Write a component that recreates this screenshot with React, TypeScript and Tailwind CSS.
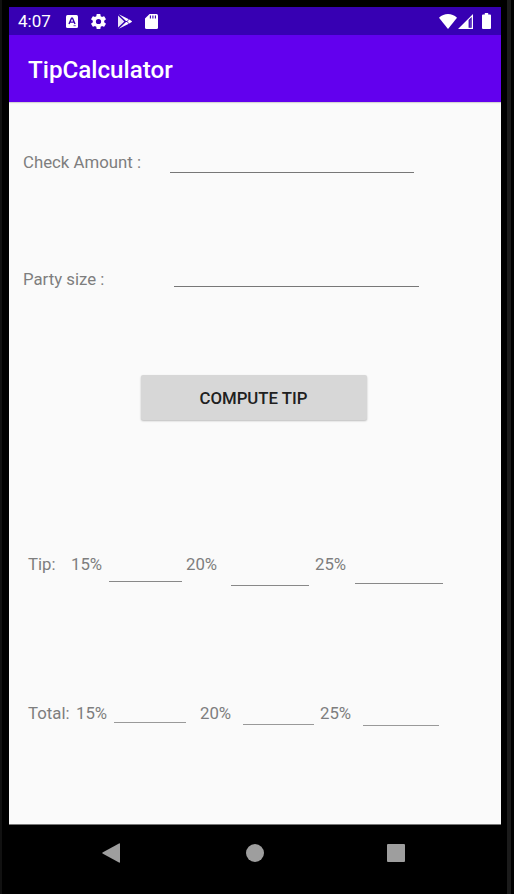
import React from "react";

function Label({ text, className }: { text: string; className: string }) {
  return <span className={`shrink-0 whitespace-nowrap ${className}`}>{text}</span>;
}

function Field({ label, className }: { label: string; className: string }) {
  return (
    <input
      aria-label={label}
      className={`shrink-0 border-b bg-transparent outline-none ${className}`}
    />
  );
}

function StatusBar() {
  return (
    <div className="flex h-7 shrink-0 items-center bg-[#3700b3] text-white">
      <span className="ml-[9px] w-[48px] text-[17px] leading-[30px]">4:07</span>
      <svg className="h-[13px] w-3" viewBox="0 0 12 13" fill="white">
        <rect width="12" height="13" rx="1.5" />
        <path d="M3 9 L5.5 3.3 H6.5 L9 9 M4.1 7.1 H7.9" stroke="#3700b3" strokeWidth="1.4" fill="none" />
        <path d="M7.5 10.7h2.3" stroke="#3700b3" strokeWidth=".7" />
      </svg>
      <svg className="ml-[11px] h-[19px] w-[19px]" viewBox="0 0 24 24" fill="white">
        <path d="M19.14 12.94c.04-.3.06-.61.06-.94s-.02-.64-.07-.94l2.03-1.58a.49.49 0 0 0 .12-.61l-1.92-3.32a.49.49 0 0 0-.59-.22l-2.39.96a7 7 0 0 0-1.62-.94l-.36-2.54a.48.48 0 0 0-.48-.41h-3.84a.48.48 0 0 0-.47.41l-.36 2.54c-.59.24-1.13.57-1.62.94l-2.39-.96a.48.48 0 0 0-.59.22L2.74 8.87a.47.47 0 0 0 .12.61l2.03 1.58c-.05.3-.09.63-.09.94s.02.64.07.94l-2.03 1.58a.49.49 0 0 0-.12.61l1.92 3.32c.12.22.37.29.59.22l2.39-.96c.5.38 1.03.7 1.62.94l.36 2.54c.05.24.24.41.48.41h3.84c.24 0 .44-.17.47-.41l.36-2.54c.59-.24 1.13-.56 1.62-.94l2.39.96c.22.08.47 0 .59-.22l1.92-3.32a.47.47 0 0 0-.12-.61zM12 15.3a3.3 3.3 0 1 1 0-6.6 3.3 3.3 0 0 1 0 6.6z" />
      </svg>
      <svg className="ml-2.5 h-[15px] w-[14px]" viewBox="0 0 14 15" fill="white">
        <path d="M0 1.5 6.3 7.5 0 13.5z" fillOpacity=".9" />
        <path d="M.8 .2 10.8 5.2 9 7 8 7z" />
        <path d="M.8 14.8 10.8 9.8 9 8 8 8z" />
        <path d="M11.3 5.5 13.6 6.9Q14.3 7.5 13.6 8.1L11.3 9.5 9.3 7.5z" />
      </svg>
      <svg className="ml-[13px] h-[15px] w-[13px]" viewBox="0 0 13 15" fill="white">
        <path d="M4.6 0H11.5A1.5 1.5 0 0 1 13 1.5V13.5A1.5 1.5 0 0 1 11.5 15H1.5A1.5 1.5 0 0 1 0 13.5V4.6z" />
        <path d="M5.4 1.4v3M7.9 1.4v3M10.4 1.4v3" stroke="#3700b3" strokeWidth="1.1" />
      </svg>
      <svg className="ml-auto h-[15px] w-[18px]" viewBox="0 0 18 15" fill="white">
        <path d="M9 15 0 3.7Q4 0 9 0t9 3.7z" />
      </svg>
      <svg className="ml-px h-[15px] w-[15px]" viewBox="0 0 15 15" fill="white">
        <path d="M0 15 15 0V15zM10.6 6V13.7H13.7V2.9z" fillRule="evenodd" />
        <path d="M12.2 5.6v7.4" stroke="white" strokeOpacity=".35" strokeWidth=".8" />
      </svg>
      <svg className="mr-2.5 ml-[9px] h-4 w-[9px]" viewBox="0 0 9 16" fill="white">
        <path d="M2.8 0h3.4v1.5H8a1 1 0 0 1 1 1V15a1 1 0 0 1-1 1H1a1 1 0 0 1-1-1V2.5a1 1 0 0 1 1-1h1.8z" />
      </svg>
    </div>
  );
}

export default function App() {
  return (
    <div className="flex h-[894px] w-[514px] overflow-hidden bg-black font-['Roboto',sans-serif]">
      <div className="w-0.5 shrink-0 bg-[#111111]" />
      <div className="ml-[7px] flex w-[492px] shrink-0 flex-col pt-[7px]">
        <StatusBar />
        <header className="z-10 flex h-[67px] shrink-0 items-center bg-[#6200ee] pl-[19px] shadow-[0_1px_1px_rgba(0,0,0,0.15)]">
          <h1 className="pt-0.5 text-[24.2px] leading-9 font-medium text-white">TipCalculator</h1>
        </header>
        <main className="flex h-[723px] shrink-0 flex-col border-b border-[#777777] bg-[#fafafa] text-[16.8px] leading-6 text-[#7e7e7e]">
          <div className="mt-12 ml-3.5 flex h-6 items-start">
            <Label text="Check Amount :" className="w-[147px]" />
            <Field label="Check amount" className="h-[23px] w-[244px] border-[#777777]" />
          </div>
          <div className="mt-[93px] ml-3.5 flex h-6 items-start">
            <Label text="Party size :" className="w-[151px]" />
            <Field label="Party size" className="h-5 w-[245px] border-[#777777]" />
          </div>
          <button className="mt-[84px] ml-[132px] h-[45px] w-[226px] shrink-0 rounded-xs bg-[#d7d7d7] pt-px pr-px text-[16.8px] font-medium text-[#202020] shadow-[0_1px_2px_rgba(0,0,0,0.25)]">
            COMPUTE TIP
          </button>
          <div className="mt-[132px] ml-[19px] flex h-8 shrink-0 items-start">
            <Label text="Tip:" className="w-[43px]" />
            <Label text="15%" className="w-[38px]" />
            <Field label="Tip at 15%" className="h-[30px] w-[73px] border-[#888888]" />
            <Label text="20%" className="ml-1 w-[45px]" />
            <Field label="Tip at 20%" className="h-[34px] w-[78px] border-[#888888]" />
            <Label text="25%" className="ml-1.5 w-10" />
            <Field label="Tip at 25%" className="h-8 w-[88px] border-[#888888]" />
          </div>
          <div className="mt-[117px] ml-[19px] flex h-8 shrink-0 items-start">
            <Label text="Total:" className="w-12" />
            <Label text="15%" className="w-[38px]" />
            <Field label="Total at 15%" className="h-[22px] w-[72px] border-[#999999]" />
            <Label text="20%" className="ml-3.5 w-[43px]" />
            <Field label="Total at 20%" className="h-6 w-[71px] border-[#999999]" />
            <Label text="25%" className="ml-1.5 w-[43px]" />
            <Field label="Total at 25%" className="h-[25px] w-[76px] border-[#999999]" />
          </div>
        </main>
        <nav className="flex h-14 items-center">
          <svg className="ml-[93px] h-5 w-[18px]" viewBox="0 0 18 20" fill="#9e9e9e">
            <path d="M17 .5Q18 0 18 1V19Q18 20 17 19.5L.5 10.6Q0 10 .5 9.4z" />
          </svg>
          <span className="ml-[126px] size-[18px] rounded-full bg-[#9e9e9e]" />
          <span className="ml-[123px] size-[18px] rounded-[1px] bg-[#9e9e9e]" />
        </nav>
      </div>
      <div className="ml-1.5 w-1 shrink-0 bg-[#1b1b1b]" />
    </div>
  );
}
